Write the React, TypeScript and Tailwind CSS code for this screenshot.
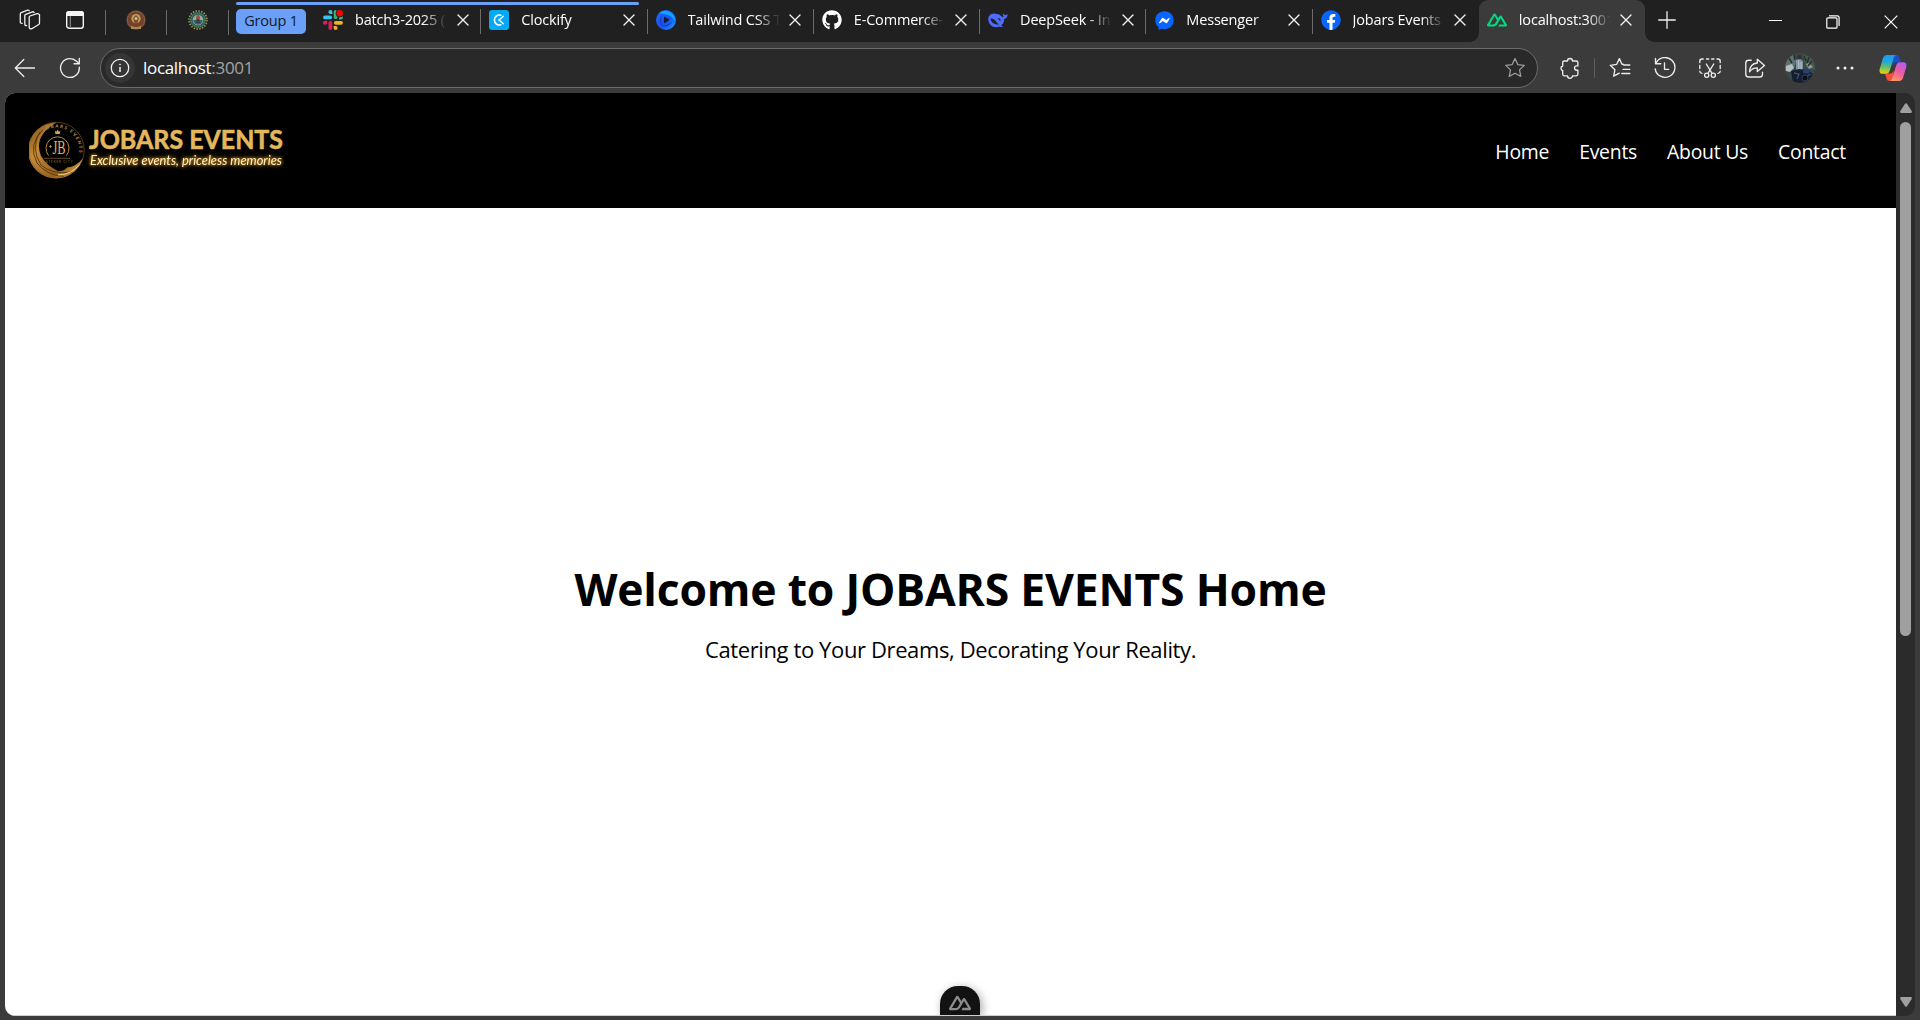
import type { ReactNode } from "react";
import { FaGithub, FaFacebookMessenger, FaFacebook } from "react-icons/fa";

const NUXT_PATH =
  "M13.4642 19.8295h8.9218c.2834 0 .5618-.0723.8072-.2098a1.5899 1.5899 0 0 0 .5908-.5732 1.5293 1.5293 0 0 0 .216-.783 1.529 1.529 0 0 0-.2167-.7828L17.7916 7.4142a1.59 1.59 0 0 0-.5907-.573 1.6524 1.6524 0 0 0-.807-.2099c-.2833 0-.5616.0724-.807.2098a1.59 1.59 0 0 0-.5907.5731L13.4642 9.99l-2.9954-5.0366a1.5913 1.5913 0 0 0-.591-.573 1.6533 1.6533 0 0 0-.8071-.2098c-.2834 0-.5617.0723-.8072.2097a1.5913 1.5913 0 0 0-.591.573L.2168 17.4808A1.5292 1.5292 0 0 0 0 18.2635c-.0001.2749.0744.545.216.783a1.59 1.59 0 0 0 .5908.5732c.2454.1375.5238.2098.8072.2098h5.6014c2.2192 0 3.8557-.9661 4.9818-2.8513l2.7341-4.6948 1.464-2.5133 4.3959 7.5446h-5.8606ZM7.123 17.3694l-3.9083-.0009 5.8586-10.0568 2.9232 5.0284-1.9572 3.3613c-.7474 1.2231-1.5971 1.668-2.9163 1.668z";

function NuxtIcon({ className }: { className: string }) {
  return (
    <svg viewBox="0 0 24 24" className={className} fill="currentColor">
      <path d={NUXT_PATH} />
    </svg>
  );
}

function SlackIcon() {
  return (
    <svg viewBox="0 0 20 20" className="size-5">
      <g strokeWidth="3.8" strokeLinecap="round">
        <path d="M2 7.4h5.2" stroke="#36c5f0" />
        <path d="M12.6 2v5.2" stroke="#2eb67d" />
        <path d="M12.8 12.8H18" stroke="#ecb22e" />
        <path d="M7.4 12.8V18" stroke="#e01e5a" />
      </g>
      <path d="M7.4 0a2 2 0 0 1 2 2v2h-2a2 2 0 0 1 0-4Z" fill="#36c5f0" />
      <path d="M20 7.4a2 2 0 0 1-2 2h-2v-2a2 2 0 0 1 4 0Z" fill="#2eb67d" />
      <path d="M12.6 20a2 2 0 0 1-2-2v-2h2a2 2 0 0 1 0 4Z" fill="#ecb22e" />
      <path d="M0 12.8a2 2 0 0 1 2-2h2v2a2 2 0 0 1-4 0Z" fill="#e01e5a" />
      <circle cx="16.7" cy="3.3" r="4" fill="#202020" />
      <circle cx="16.7" cy="3.3" r="3.2" fill="#ff0000" />
    </svg>
  );
}

function ClockifyIcon() {
  return (
    <svg viewBox="0 0 20 20" className="size-5" fill="none">
      <rect width="20" height="20" rx="3" fill="#03a9f4" />
      <path d="M11.8 5.2A5 5 0 1 0 11.8 14.8" stroke="#fff" strokeWidth="1.6" strokeLinecap="round" />
      <path d="M14.200 6.200 11.200 9.100M14.200 13.800 11.200 10.900" stroke="#fff" strokeWidth="1.4" strokeLinecap="round" />
      <circle cx="10.200" cy="10" r="1" fill="#fff" />
    </svg>
  );
}

function SwirlIcon() {
  return (
    <svg viewBox="0 0 20 20" className="size-5">
      <defs>
        <linearGradient id="swirl" x1="0" y1="0" x2="1" y2="1">
          <stop offset="0" stopColor="#1e6ff5" />
          <stop offset=".55" stopColor="#1652f0" />
          <stop offset="1" stopColor="#1da1ff" />
        </linearGradient>
      </defs>
      <circle cx="10" cy="10" r="10" fill="url(#swirl)" />
      <path d="M3 3Q9-1.500 15.500 3 19.500 6.500 19 11 15 5.500 9 4.300 5 4 3 3Z" fill="#12a0ff" />
      <path d="M5.500 5 5.500 13.500q.4 2.600 3 1.900L16 12q-3 5-8 4.800Q3.500 15.500 3.500 10 3.800 7 5.500 5Z" fill="#1a3fd0" />
      <path d="M7.900 7.600q0-1.100 1-.7l3.900 2.400q.8.600 0 1.200L8.900 12.900q-1 .4-1-.7Z" fill="#181a2c" />
    </svg>
  );
}

function WhaleIcon() {
  return (
    <svg viewBox="0 0 20 20" className="size-5">
      <path
        d="M19.600 4.300c-.6-.3-1.100.5-1.900.6-1.400.3-2-.6-2.700-1.900-.3 1.300-.3 2.500.7 3.600-.4.500-.9.600-1.400.3C12.500 5.800 11.600 4.500 10.200 4c-.6-.2-.6.200-.3.600C6.500 2.700 2.300 3.600.8 6.600c-1 2.200-.6 5.100 1 7.300 2.300 3.100 6.300 4.100 9.300 2.500.9.400 2.600.7 3.500.3.400-.3-.7-.9-1.400-1.400 2.200-1.600 2.900-3.800 3.100-6.500 1.800 0 3.300-1.600 3.300-4.500Z"
        fill="#4d6bfe"
      />
      <path d="M2.600 8.500c2.300-.5 4.800 1.700 6.200 3.900.8 1.200 1.500 1.700 2.500 2.100-1.800.4-2.900-.4-3.900-.3-2.500-.4-4.600-2.600-4.800-5.700Z" fill="#202020" />
      <path d="M9.600 8.100c1.600-.3 3 1 3 2.600-.3.400-.9.200-1.200-.2-.2-1.100-.7-1.600-1.800-1.900Z" fill="#202020" />
    </svg>
  );
}

function MessengerIcon() {
  return (
    <span className="relative flex size-5 items-center justify-center">
      <span className="absolute size-3 rounded-full bg-white" />
      <FaFacebookMessenger className="relative size-[19px] text-[#0866ff]" />
    </span>
  );
}

function FacebookIcon() {
  return (
    <span className="relative flex size-5 items-center justify-center">
      <span className="absolute inset-x-[5px] bottom-0 top-[3px] rounded-b-full bg-white" />
      <FaFacebook className="relative size-5 text-[#0866ff]" />
    </span>
  );
}

function Cross() {
  return (
    <svg viewBox="0 0 12 12" className="size-3 shrink-0" stroke="#f0f0f0" strokeWidth="1.4" strokeLinecap="round">
      <path d="m1 1 10 10M11 1 1 11" />
    </svg>
  );
}

function Line({ className = "size-[22px]", children }: { className?: string; children: ReactNode }) {
  return (
    <svg viewBox="0 0 22 22" className={className} fill="none" stroke="#ececec" strokeWidth="1.35" strokeLinecap="round" strokeLinejoin="round">
      {children}
    </svg>
  );
}

const TABS: { title: string; icon: ReactNode }[] = [
  { title: "batch3-2025 (", icon: <SlackIcon /> },
  { title: "Clockify", icon: <ClockifyIcon /> },
  { title: "Tailwind CSS T", icon: <SwirlIcon /> },
  { title: "E-Commerce-", icon: <FaGithub className="size-5 text-white" /> },
  { title: "DeepSeek - In", icon: <WhaleIcon /> },
  { title: "Messenger", icon: <MessengerIcon /> },
  { title: "Jobars Events", icon: <FacebookIcon /> },
];

function TabBody({ title, icon }: { title: string; icon: ReactNode }) {
  return (
    <>
      <span className="flex size-5 shrink-0 items-center justify-center">{icon}</span>
      <span className="ml-3 w-[92px] overflow-hidden whitespace-nowrap text-[14.5px] leading-5 tracking-[-0.18px] text-white [mask-image:linear-gradient(to_right,black_68px,transparent_92px)]">
        {title}
      </span>
      <span className="ml-[9.500px] flex">
        <Cross />
      </span>
    </>
  );
}

function TabStrip() {
  return (
    <div className="relative flex h-[42px] shrink-0 bg-[#202020]">
      <div className="flex w-[229px] items-center pb-[2px]">
        <svg viewBox="0 0 22 22" className="ml-[19px] size-[22px]" fill="none" stroke="#f0f0f0" strokeWidth="1.3" strokeLinejoin="round" strokeLinecap="round">
          <path d="M10.200 8.200q0-.9.800-1.200l7-2.300q1.700-.4 2.500 1.200v8.300q0 .9-.8 1.300l-6.900 4.200q-1.800.7-2.600-1Z" />
          <path d="M7.500 16.500q-1.600.3-1.700-1.200V6.600q0-.9.900-1.300l6.800-2.500q1-.2 1.600.7" />
          <path d="M3.200 14.300q-1.900.2-1.900-1.400V5q0-1 .9-1.300L8.600 1.200q1-.2 1.600.5" />
        </svg>
        <svg viewBox="0 0 20 20" className="ml-6 size-5" fill="none">
          <rect x="1.700" y="1.700" width="16.600" height="16.600" rx="2.500" stroke="#f4f4f4" strokeWidth="1.400" />
          <path d="M1 6V4a3 3 0 0 1 3-3h12a3 3 0 0 1 3 3v2Z" fill="#f4f4f4" />
          <path d="M5.300 6v12" stroke="#999" strokeWidth="1" />
        </svg>
        <span className="ml-5 mt-1 h-[25px] w-px bg-[#6b6b6b]" />
        <svg viewBox="0 0 20 20" className="ml-5 size-5">
          <circle cx="10" cy="10" r="9.700" fill="#6e4630" />
          <circle cx="10" cy="10" r="8.600" fill="none" stroke="#a2795c" strokeWidth="1" strokeDasharray="1 1" />
          <circle cx="10" cy="10" r="6.600" fill="#7a3b2a" />
          <circle cx="10" cy="8.600" r="4.700" fill="#b99a55" />
          <path d="M10 5.200 12.800 8 11.500 13h-3L7.200 8Z" fill="#7b4b31" />
          <circle cx="10" cy="8.400" r="1.500" fill="#d2bd84" />
          <path d="M5 15.500Q10 18.500 15 15.500V19H5Z" fill="#a88a4e" />
        </svg>
        <span className="ml-5 mt-1 h-[25px] w-px bg-[#6b6b6b]" />
        <svg viewBox="0 0 20 20" className="ml-[21px] size-5">
          <circle cx="10" cy="10" r="9" fill="none" stroke="#a39a5c" strokeWidth="1.600" strokeDasharray="1.500 1.330" />
          <circle cx="10" cy="10" r="8.100" fill="#2d6350" />
          <circle cx="10" cy="10" r="7" fill="none" stroke="#6b9a80" strokeWidth=".8" strokeDasharray="1 1" />
          <circle cx="10" cy="10" r="5.300" fill="#9aa6a0" />
          <path d="M5.300 10h9.400a4.700 4.700 0 0 1-9.400 0Z" fill="#3d5d73" />
          <path d="M8.800 5.500h2.400l.6 7.500H8.200Z" fill="#2b463c" />
          <circle cx="10" cy="7.200" r="1.700" fill="#b3493c" />
        </svg>
        <span className="ml-5 mt-1 h-[25px] w-px bg-[#6b6b6b]" />
      </div>

      <div className="absolute left-[236px] top-[2px] h-[3px] w-[403px] rounded-full bg-[#6aa0f8]" />
      <div className="ml-[7px] mt-[9px] flex h-[25px] w-[70px] items-center justify-center rounded-[5px] bg-[#6aa0f8] text-[14.500px] leading-none tracking-[-0.2px] text-[#141a26]">
        Group 1
      </div>

      <div className="ml-[9px] flex">
        {TABS.map((tab) => (
          <div key={tab.title} className="relative flex h-10 w-[166.280px] items-center pl-[8px]">
            <TabBody title={tab.title} icon={tab.icon} />
            {tab.title.startsWith("Jobars") ? null : <span className="absolute right-0 top-[9px] h-[25px] w-px bg-[#6b6b6b]" />}
          </div>
        ))}
        <div className="relative flex h-[42px] w-[166.500px] items-center rounded-t-[9px] bg-[#3b3b3b] pb-[2px] pl-[8px]">
          <TabBody title="localhost:3001" icon={<NuxtIcon className="size-5 text-[#00dc82]" />} />
          <span className="absolute bottom-0 right-full size-[9px] bg-[radial-gradient(circle_at_top_left,#202020_8.500px,#3b3b3b_9px)]" />
          <span className="absolute bottom-0 left-full size-[9px] bg-[radial-gradient(circle_at_top_right,#202020_8.500px,#3b3b3b_9px)]" />
        </div>
      </div>

      <svg viewBox="0 0 18 18" className="ml-[13px] mt-[10.500px] size-[18px]" stroke="#f0f0f0" strokeWidth="1.300" strokeLinecap="round">
        <path d="M9 .7v16.600M.7 9h16.600" />
      </svg>
      <div className="ml-auto flex h-10 items-center pt-[3px]">
        <span className="flex w-[58px] justify-center pb-[3px]">
          <span className="h-px w-[13px] bg-white" />
        </span>
        <span className="flex w-[58px] justify-center">
          <svg viewBox="0 0 14 14" className="size-[14px]" fill="none" stroke="#fff" strokeWidth="1.200">
            <rect x=".8" y="2.800" width="10.200" height="10.400" rx="1" />
            <path d="M3 .9h8.200a1.900 1.900 0 0 1 1.900 1.900V11" />
          </svg>
        </span>
        <span className="flex w-[58px] justify-center">
          <svg viewBox="0 0 14 14" className="size-[14px]" stroke="#fff" strokeWidth="1.200">
            <path d="m.7.7 12.600 12.600M13.300.7.7 13.300" />
          </svg>
        </span>
      </div>
    </div>
  );
}

const STAR = "m11 1.600 2.800 6 6.500.8-4.800 4.500 1.300 6.500L11 16.200l-5.800 3.200 1.300-6.500L1.700 8.400l6.500-.8Z";

function CopilotIcon() {
  return (
    <svg viewBox="0 0 28 26" className="h-[26px] w-7">
      <defs>
        <linearGradient id="cpA" x1=".4" y1="0" x2=".3" y2="1">
          <stop offset="0" stopColor="#1b9af0" />
          <stop offset=".35" stopColor="#23a8dc" />
          <stop offset=".62" stopColor="#5fbf6a" />
          <stop offset="1" stopColor="#f4cf12" />
        </linearGradient>
        <linearGradient id="cpB" x1=".8" y1="0" x2=".3" y2="1">
          <stop offset="0" stopColor="#b05cf5" />
          <stop offset=".5" stopColor="#ee5aa0" />
          <stop offset="1" stopColor="#ff9a62" />
        </linearGradient>
      </defs>
      <path d="M13 0h4.500c2 0 2.600 1.400 3.200 3.400L22 7.500h-4.500c-2.400 0-3.200 1.200-3.900 3.300Z" fill="#1750c4" />
      <path d="M15 26h-4.500c-2 0-2.600-1.300-3.200-3.300L6 18.600h4.500c2.400 0 3.200-1.200 3.900-3.400Z" fill="#f0503c" />
      <path d="M8 0h9.500c-1.800.2-2.400 1.700-3 3.600l-3.600 11.700c-.8 2.400-1.800 3.500-4.300 3.500H3.700C.8 18.800 0 16.500.8 13.700L3.700 4C4.500 1.400 5.600 0 8 0Z" fill="url(#cpA)" />
      <path d="M20 26h-9.500c1.800-.2 2.400-1.700 3-3.600l3.600-11.600c.8-2.400 1.800-3.500 4.300-3.500h2.900c2.900 0 3.700 2.300 2.900 5L24.300 22c-.8 2.600-1.900 4-4.300 4Z" fill="url(#cpB)" />
    </svg>
  );
}

function Avatar() {
  return (
    <svg viewBox="0 0 30 30" className="size-[30px] rounded-full">
      <rect width="30" height="30" fill="#39464a" />
      <path d="M0 6 8 2l4 5-3 8-9 3Z" fill="#5e7072" />
      <path d="M18 2 30 5v12l-9-3Z" fill="#46594e" />
      <path d="m1 13 6-2 2 4-4 4-4-1Z" fill="#b3bec0" />
      <path d="m21 11 3-1 4 4-4 2Z" fill="#8c9c9c" />
      <path d="M4 5 7 10M24 4l-2 6M27 8l-4 5M9 2l1 5M19 3l2 5" stroke="#24302c" strokeWidth="1.500" />
      <path d="m11 7 4-1 3 2v10l-7-1Z" fill="#7f93a3" />
      <path d="m13.500 7 .5 10M16 9v8" stroke="#b8c4cd" strokeWidth="1" />
      <circle cx="14.500" cy="4" r="2.300" fill="#3a2f2c" />
      <path d="m6 18 8-2 9 1 5 4-5 9H8Z" fill="#181f2c" />
      <path d="m18 17 5-1 3 2-3 3-5-1Z" fill="#27406f" />
      <path d="M9 20l5 1-2 5M22 23l4-2" stroke="#34507f" strokeWidth="1.300" fill="none" />
      <circle cx="20" cy="25" r="3" fill="#0b0e14" stroke="#2f3f5e" />
    </svg>
  );
}

function Tool({ children }: { children: ReactNode }) {
  return <span className="flex w-[45px] shrink-0 items-center justify-center">{children}</span>;
}

function Toolbar() {
  return (
    <div className="flex h-[51px] shrink-0 items-center bg-[#3b3b3b]">
      <Line className="ml-[14px] size-[22px]">
        <path d="M1.500 11h19M9.800 2.500 1.300 11l8.500 8.500" />
      </Line>
      <Line className="ml-[23px] size-[22px]">
        <path d="M20.300 10.200A9.400 9.400 0 1 1 16.700 3.600l3.400 3" />
        <path d="M20.300 1.500v5.200h-5.200" />
      </Line>
      <div className="ml-[19px] flex h-10 w-[1438px] items-center rounded-full border border-[#6c6c6c] bg-[#292929] pl-1 pr-[11px]">
        <span className="flex size-[30px] items-center justify-center rounded-full bg-[#353535]">
          <svg viewBox="0 0 20 20" className="size-5" fill="none" stroke="#f0f0f0" strokeWidth="1.300">
            <circle cx="10" cy="10" r="8.700" />
            <path d="M10 9v5" strokeWidth="1.500" />
            <circle cx="10" cy="6.500" r=".6" fill="#f0f0f0" strokeWidth=".6" />
          </svg>
        </span>
        <span className="ml-2 text-[17px] leading-none tracking-[-0.320px] text-white">
          localhost<span className="text-[#a3a3a3]">:3001</span>
        </span>
        <svg viewBox="0 0 22 22" className="ml-auto size-[22px]" fill="none" stroke="#9a9a9a" strokeWidth="1.300" strokeLinejoin="round">
          <path d={STAR} />
        </svg>
      </div>

      <div className="ml-[9px] flex">
        <Tool>
          <Line>
            <path d="M5.200 4h3.300a2.500 2.500 0 0 1 5 0h3.700q1.700 0 1.700 1.700v3.200h-1.200a2.100 2.100 0 0 0 0 4.300h1.200v3.900q0 1.700-1.700 1.700h-3.700a2.500 2.500 0 0 1-5 0H5.200q-1.500 0-1.500-1.700v-3.500a2.400 2.400 0 0 1 0-4.600V5.700Q3.700 4 5.200 4Z" />
          </Line>
        </Tool>
        <span className="mx-[2px] h-5 w-px self-center bg-[#5e5e5e]" />
        <Tool>
          <Line>
            <path d="M14.500 7.500 12.800 7 10.400 1.600 7.700 7.300 1.300 8.300l4.600 4.400-1.200 6.500 5.600-3.100M14.800 8h6M14 12.300h6.800M12.800 16.500h8" />
          </Line>
        </Tool>
        <Tool>
          <Line>
            <path d="M2 6.300A9.900 9.900 0 1 1 1.200 11.800M1.500 1.500v5.200h5.300M10.500 6v6.300h4.200" />
          </Line>
        </Tool>
        <Tool>
          <Line>
            <path d="M.8 5.500V4.200Q.8 2 3 2h1.200M7.500 2h2.200M12.700 2h2.200M18 2h1q2.200 0 2.200 2.200v1.300M.8 8.500v3M21.200 8.500v3M.8 14.200q.1 2 2.200 2.200M21.200 14.200q-.1 2-2.200 2.200" />
            <path d="m7.300 7 5.600 9.200M14.700 7 9.100 16.200" />
            <circle cx="7.700" cy="18.200" r="2.100" />
            <circle cx="14.300" cy="18.200" r="2.100" />
          </Line>
        </Tool>
        <Tool>
          <Line>
            <path d="M7.200 3.200H4.500Q1.800 3.200 1.800 6v11.200q0 2.800 2.700 2.800h11.300q2.700 0 2.700-2.800v-2" />
            <path d="M13.300 2.200 20.500 8.400l-7.200 6.200v-3.800q-5.200 0-7.800 4Q6 6.500 13.300 6Z" />
          </Line>
        </Tool>
        <Tool>
          <Avatar />
        </Tool>
        <Tool>
          <svg viewBox="0 0 18 4" className="h-1 w-[18px]" fill="#f0f0f0">
            <circle cx="2" cy="2" r="1.500" />
            <circle cx="9" cy="2" r="1.500" />
            <circle cx="16" cy="2" r="1.500" />
          </svg>
        </Tool>
        <span className="flex w-[52px] items-center justify-center">
          <CopilotIcon />
        </span>
      </div>
    </div>
  );
}

function BrandLogo() {
  return (
    <svg viewBox="0 0 260 62" className="h-[62px] w-[260px]">
      <defs>
        <linearGradient id="gold" x1="0" y1="0" x2="1" y2="1">
          <stop offset="0" stopColor="#7a4a17" />
          <stop offset=".35" stopColor="#c58b35" />
          <stop offset=".7" stopColor="#96601f" />
          <stop offset="1" stopColor="#e6b95c" />
        </linearGradient>
        <path id="ring" d="M14.500 11.800A22.500 22.500 0 0 1 49.300 36" />
      </defs>
      <path d="M27.500 2.500A28 28 0 1 0 54 38Q47 47 38 47.500 35 51.500 29 51 18 46 12 36 4 16 27.500 2.500Z" fill="url(#gold)" />
      <path d="M15 8.500Q-2 24 8 43 17 55 35 56.500M11 12Q1 28 12 45 23 55 43 52" fill="none" stroke="#3d2208" strokeWidth=".7" />
      <path d="M29 55Q42 55 51 44" fill="none" stroke="#f2cf7c" strokeWidth="1" />
      <circle cx="27.500" cy="30" r="27.700" fill="none" stroke="#8a6126" strokeWidth=".6" />
      <text fill="#c2924a" fontSize="4.600" fontFamily="Lato" fontWeight="700" letterSpacing="1.300">
        <textPath href="#ring">JOBARS EVENTS</textPath>
      </text>
      <path d="M19.500 35.500a11.500 11.500 0 1 1 18 0" fill="none" stroke="#b98a41" strokeWidth="1" />
      <path d="m25.800 10.500 1.400 1.300 1.400-2 1.400 2 1.400-1.300-.6 3.500h-4.400Z" fill="#d5a552" />
      <text x="23.500" y="34" fill="#e0b462" fontSize="18" fontFamily="Liberation Serif, serif" textLength="13" lengthAdjust="spacingAndGlyphs">
        JB
      </text>
      <path d="M21.500 25v3M20 26.500h3" stroke="#d5a552" strokeWidth=".7" />
      <path d="M15 38.300h26" stroke="#8c652c" strokeWidth=".7" />
      <text x="13.500" y="42.500" fill="#8c652c" fontSize="3.300" fontFamily="Lato" textLength="30">
        CATERER CITY
      </text>
      <text x="60" y="29" fill="#e3b75c" stroke="#e3b75c" strokeWidth=".6" fontSize="26.500" fontFamily="Lato" fontWeight="700" textLength="194" lengthAdjust="spacingAndGlyphs">
        JOBARS EVENTS
      </text>
      <text
        x="61"
        y="45"
        fill="#fff0c4"
        fontFamily="Lato"
        fontWeight="400"
        fontSize="12.500"
        fontStyle="italic"
        textLength="192"
        lengthAdjust="spacingAndGlyphs"
        className="[filter:drop-shadow(0_0_1.500px_#c98f22)_drop-shadow(0_0_2px_#8a5c10)]"
      >
        Exclusive events, priceless memories
      </text>
    </svg>
  );
}

function Page() {
  return (
    <div className="relative flex w-[1891px] flex-col overflow-hidden border-b border-[#cfcfcf] bg-white">
      <header className="flex h-[115px] shrink-0 items-start justify-between bg-black pl-6 pr-[50px] pt-[27px]">
        <BrandLogo />
        <nav className="mt-[18px] flex gap-[30px] text-[19.400px] leading-[28px] tracking-[-0.250px] text-white">
          <a>Home</a>
          <a>Events</a>
          <a>About Us</a>
          <a>Contact</a>
        </nav>
      </header>
      <main className="flex flex-col items-center pt-[353px] text-black">
        <h1 className="text-[44.500px] font-bold leading-[56px] tracking-[-0.200px]">Welcome to JOBARS EVENTS Home</h1>
        <p className="mt-[15px] text-[22px] leading-[35px] tracking-[-0.380px]">Catering to Your Dreams, Decorating Your Reality.</p>
      </main>
      <div className="absolute bottom-0 left-[935px] flex h-[29px] w-10 justify-center rounded-t-[18px] bg-[#121212] pt-[6px] shadow-[2px_2px_10px_rgba(0,0,0,0.350)]">
        <NuxtIcon className="size-[22px] text-[#8c8c8c]" />
      </div>
    </div>
  );
}

function Scrollbar() {
  return (
    <div className="flex w-[19px] flex-col items-center bg-[#2b2b2b]">
      <svg viewBox="0 0 12 10" className="mt-[10px] h-[10px] w-3" fill="#9f9f9f">
        <path d="M5 .8q1-1.200 2 0L11.700 8q.7 2-1 2H1.300q-1.700 0-1-2Z" />
      </svg>
      <span className="mt-[9px] h-[514px] w-[11px] rounded-full bg-[#9f9f9f]" />
      <svg viewBox="0 0 12 10" className="mb-[9px] mt-auto h-[10px] w-3" fill="#9f9f9f">
        <path d="M5 9.200q1 1.200 2 0L11.700 2q.7-2-1-2H1.300Q-.4 0 .3 2Z" />
      </svg>
    </div>
  );
}

export default function App() {
  return (
    <div className="flex h-[1020px] w-[1920px] flex-col overflow-hidden bg-[#3b3b3b] font-['Open_Sans',sans-serif]">
      <TabStrip />
      <Toolbar />
      <div className="mx-[5px] mb-1 flex flex-1 overflow-hidden rounded-[10px]">
        <Page />
        <Scrollbar />
      </div>
    </div>
  );
}
